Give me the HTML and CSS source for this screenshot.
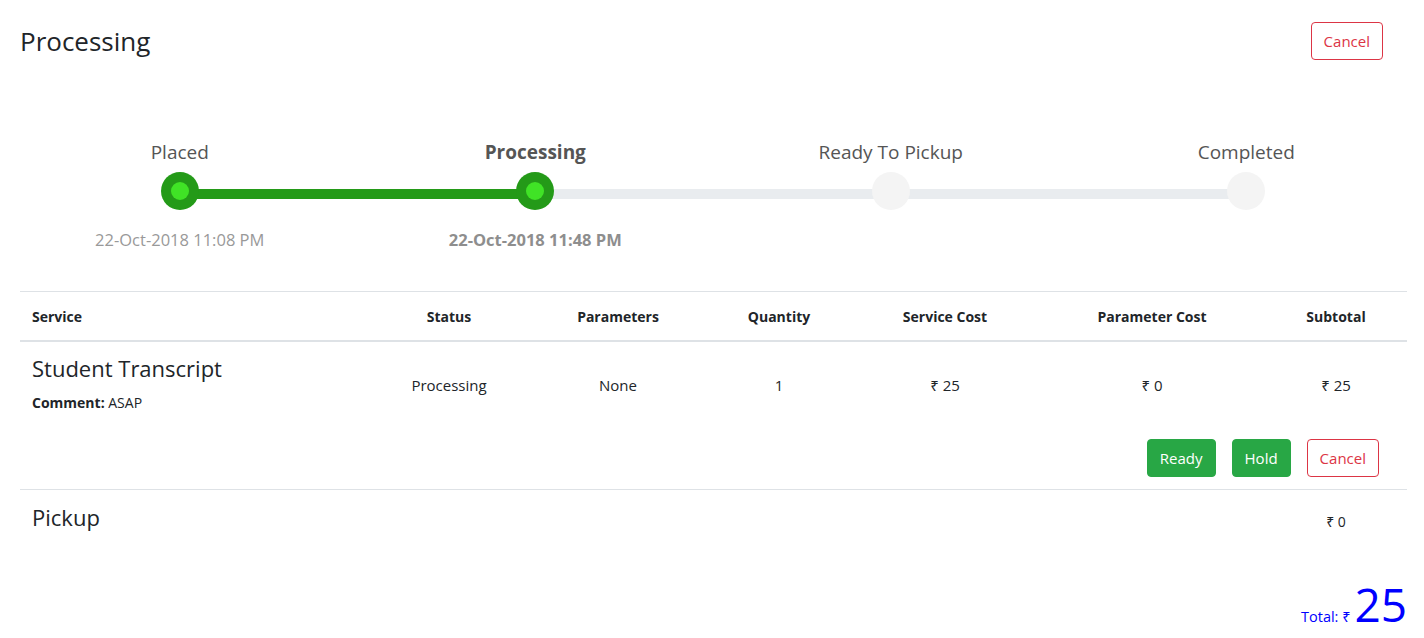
FILE: index.html
```html
<!DOCTYPE html>
<html lang="en">
<head>
<meta charset="utf-8">
<title>Order Processing</title>
<link rel="stylesheet" href="styles.css">
</head>
<body>
<header class="page-header">
  <h3 class="page-title">Processing</h3>
  <button class="btn btn-outline-danger">Cancel</button>
</header>

<section class="steps">
  <div class="track"><div class="track-fill"></div></div>
  <div class="step done">
    <div class="step-label">Placed</div>
    <div class="step-dot"></div>
    <div class="step-date">22-Oct-2018 11:08 PM</div>
  </div>
  <div class="step done current">
    <div class="step-label">Processing</div>
    <div class="step-dot"></div>
    <div class="step-date">22-Oct-2018 11:48 PM</div>
  </div>
  <div class="step">
    <div class="step-label">Ready To Pickup</div>
    <div class="step-dot"></div>
    <div class="step-date"></div>
  </div>
  <div class="step">
    <div class="step-label">Completed</div>
    <div class="step-dot"></div>
    <div class="step-date"></div>
  </div>
</section>

<section class="order">
  <table class="order-table">
    <colgroup>
      <col class="c-service"><col class="c-status"><col class="c-params"><col class="c-qty"><col class="c-scost"><col class="c-pcost"><col class="c-sub">
    </colgroup>
    <thead>
      <tr>
        <th class="left">Service</th>
        <th>Status</th>
        <th>Parameters</th>
        <th>Quantity</th>
        <th>Service Cost</th>
        <th>Parameter Cost</th>
        <th>Subtotal</th>
      </tr>
    </thead>
    <tbody>
      <tr class="item-row">
        <td class="left">
          <h4 class="item-name">Student Transcript</h4>
          <div class="comment"><b>Comment:</b> ASAP</div>
        </td>
        <td>Processing</td>
        <td>None</td>
        <td>1</td>
        <td>₹ 25</td>
        <td>₹ 0</td>
        <td>₹ 25</td>
      </tr>
      <tr class="actions-row">
        <td colspan="7">
          <div class="actions">
            <button class="btn btn-success">Ready</button>
            <button class="btn btn-success">Hold</button>
            <button class="btn btn-outline-danger">Cancel</button>
          </div>
        </td>
      </tr>
      <tr class="pickup-row">
        <td class="left"><h4 class="item-name">Pickup</h4></td>
        <td></td><td></td><td></td><td></td><td></td>
        <td class="small">₹ 0</td>
      </tr>
    </tbody>
  </table>
  <div class="total"><span class="total-label">Total: ₹</span> <span class="total-value">25</span></div>
</section>
</body>
</html>
```

FILE: styles.css
```css
* { box-sizing: border-box; }
body {
  margin: 0;
  font-family: "Open Sans", "Noto Sans", sans-serif;
  color: #212529;
  background: #fff;
  font-size: 15px;
}
.page-header {
  display: flex;
  justify-content: space-between;
  align-items: center;
  padding: 22px 41px 0 20px;
}
.page-title {
  margin: 0;
  font-size: 26px;
  font-weight: 400;
  line-height: 38px;
}
.btn {
  font-family: inherit;
  font-size: 15px;
  line-height: 24px;
  padding: 6px 12px;
  border-radius: 4px;
  border: 1px solid transparent;
  background: #fff;
  cursor: pointer;
}
.btn-outline-danger { color: #dc3545; border-color: #dc3545; }
.btn-success { color: #fff; background: #28a745; border-color: #28a745; }

.steps {
  position: relative;
  display: grid;
  grid-template-columns: repeat(4, 1fr);
  margin-top: 78px;
  padding-left: 2px;
}
.track {
  position: absolute;
  left: calc(12.5% + 1px);
  right: calc(12.5% - 1px);
  top: 51px;
  height: 10px;
  background: #e9ecef;
}
.track-fill {
  width: 33.333%;
  height: 100%;
  background: #249a18;
}
.step {
  position: relative;
  display: flex;
  flex-direction: column;
  align-items: center;
}
.step-label {
  font-size: 19px;
  line-height: 28px;
  color: #555;
}
.step-dot {
  margin-top: 6px;
  width: 38px;
  height: 38px;
  border-radius: 50%;
  background: #f4f4f4;
  display: flex;
  align-items: center;
  justify-content: center;
}
.step.done .step-dot { background: #249a18; }
.step.done .step-dot::after {
  content: "";
  width: 18px;
  height: 18px;
  border-radius: 50%;
  background: #40e326;
}
.step-date {
  margin-top: 17px;
  font-size: 16.5px;
  line-height: 26px;
  min-height: 26px;
  color: #999;
}
.step.current .step-label,
.step.current .step-date { font-weight: 700; }
.step.current .step-date { color: #8e8e8e; }

.order {
  margin: 38px 17px 0 20px;
}
.order-table {
  width: 100%;
  border-collapse: collapse;
  table-layout: fixed;
}
.c-service { width: 349px; }
.c-status { width: 160px; }
.c-params { width: 178px; }
.c-qty { width: 144px; }
.c-scost { width: 188px; }
.c-pcost { width: 226px; }
.c-sub { width: 142px; }
.order-table th,
.order-table td {
  padding: 12px;
  text-align: center;
  vertical-align: middle;
  line-height: 24px;
}
.order-table th {
  font-size: 14px;
  font-weight: 700;
  padding-top: 13px;
  padding-bottom: 11px;
  border-top: 1px solid #dee2e6;
  border-bottom: 2px solid #dee2e6;
}
.order-table .left { text-align: left; }
.item-name {
  margin: 0 0 8px;
  font-size: 22px;
  font-weight: 400;
  line-height: 29px;
}
.pickup-row .item-name { line-height: 31px; }
.comment { font-size: 14px; line-height: 24px; }
.actions-row td { padding-right: 28px; border-bottom: 1px solid #dee2e6; }
.actions {
  display: flex;
  justify-content: flex-end;
  gap: 16px;
}
.small { font-size: 14px; }
.total {
  text-align: right;
  color: #0000ff;
  margin-top: 22px;
  line-height: 58px;
}
.total-label { font-size: 14.5px; }
.total-value { font-size: 46px; }
```
